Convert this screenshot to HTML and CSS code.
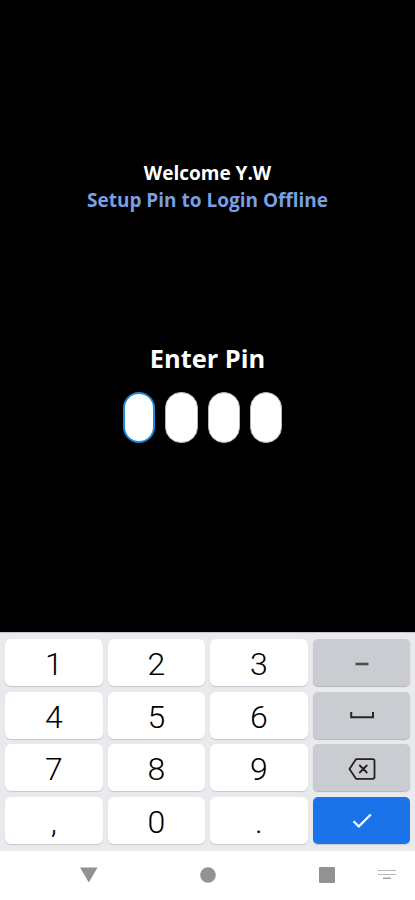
FILE: index.html
```html
<!DOCTYPE html>
<html lang="en">
<head>
    <meta charset="UTF-8">
    <meta name="viewport" content="width=device-width, initial-scale=1.0">
    <title>Setup Pin</title>
    <link rel="stylesheet" href="styles.css">
</head>
<body>
    <div class="screen">
        <div class="content">
            <div class="welcome">Welcome Y.W</div>
            <div class="subtitle">Setup Pin to Login Offline</div>
            <h1>Enter Pin</h1>
            <div class="pins">
                <div class="pin active"></div>
                <div class="pin"></div>
                <div class="pin"></div>
                <div class="pin"></div>
            </div>
        </div>
        <div class="keyboard">
            <button>1</button>
            <button>2</button>
            <button>3</button>
            <button class="gray">
                <svg width="28" height="24" viewBox="0 0 28 24"><path d="M7.5 12h13" stroke="#4b4c50" stroke-width="2.6"/></svg>
            </button>
            <button>4</button>
            <button>5</button>
            <button>6</button>
            <button class="gray">
                <svg width="28" height="24" viewBox="0 0 28 24" fill="none"><path d="M3.2 8v5.2h21.8v-5.2" stroke="#26272b" stroke-width="2"/></svg>
            </button>
            <button>7</button>
            <button>8</button>
            <button>9</button>
            <button class="gray">
                <svg width="28" height="24" viewBox="0 0 28 24" fill="none" stroke="#202124" stroke-width="1.8" stroke-linejoin="round"><path d="M8 2.2h16.8q1.700 0 1.700 1.700v16.200q0 1.700-1.700 1.700h-16.800l-6.500-9.800zM11.300 8l8 8M19.300 8l-8 8"/></svg>
            </button>
            <button>,</button>
            <button>0</button>
            <button>.</button>
            <button class="blue">
                <svg width="28" height="24" viewBox="0 0 28 24" fill="none"><path d="M5.500 12.300l5.300 5.200 12-12" stroke="#fff" stroke-width="2.300"/></svg>
            </button>
        </div>
        <div class="navbar">
            <svg width="18" height="16" viewBox="0 0 18 16" fill="#929292"><path d="M0 0.500h17.500l-8.700 15z"/></svg>
            <svg width="16" height="16" viewBox="0 0 16 16" fill="#929292"><circle cx="8" cy="8" r="7.800"/></svg>
            <svg width="16" height="16" viewBox="0 0 16 16" fill="#929292"><rect width="16" height="16" rx="1"/></svg>
            <svg width="18" height="11" viewBox="0 0 18 11" stroke="#a0a0a0" fill="none"><path d="M0 1.500h18" stroke-width="1.200" stroke-dasharray="2 .6"/><path d="M0 5.500h18" stroke-width="1.200" stroke-dasharray="2 .6"/><path d="M5 9.300h8" stroke-width="1.500"/></svg>
        </div>
    </div>
</body>
</html>
```
FILE: styles.css
```css
body {
    margin: 0;
    background-color: #000;
    font-family: "Open Sans", sans-serif;
}
.screen {
    display: flex;
    flex-direction: column;
    width: 415px;
    height: 900px;
    overflow: hidden;
}
.content {
    flex: 1;
    padding-top: 160px;
    text-align: center;
    font-weight: bold;
    color: #fff;
}
.welcome,
.subtitle {
    font-size: 19px;
    line-height: 27px;
}
.subtitle {
    color: #7a9fe0;
}
h1 {
    margin: 126px 0 0;
    font-size: 25.4px;
    line-height: 36px;
}
.pins {
    display: flex;
    gap: 10px;
    margin: 15.500px 0 0 123px;
}
.pin {
    box-sizing: border-box;
    width: 32.3px;
    height: 51px;
    background-color: #fff;
    border: 1px solid #b5b5b5;
    border-radius: 16px;
}
.pin.active {
    border: 2px solid #1d87d8;
}
.keyboard {
    box-sizing: border-box;
    display: grid;
    grid-template-columns: repeat(4, 1fr);
    grid-template-rows: repeat(4, 1fr);
    gap: 5.500px 5px;
    height: 219px;
    padding: 6px 5px 7px;
    background-color: #e8eaed;
    border-top: 1px solid #c4c6c9;
}
button {
    display: flex;
    align-items: center;
    justify-content: center;
    padding: 3px 0 0;
    font-family: Roboto, sans-serif;
    font-size: 32px;
    font-weight: 300;
    line-height: 36px;
    color: #000;
    background-color: #fff;
    border: none;
    border-radius: 6px;
    box-shadow: 0 1px 1px #c6c8cc;
}
.gray,
.blue {
    padding: 2px 0 0 1px;
    border-radius: 5px;
}
.gray {
    background-color: #cbccd2;
    box-shadow: 0 1px 1px #b4b5b9;
}
.blue {
    background-color: #1a73e8;
}
.navbar {
    box-sizing: border-box;
    display: flex;
    align-items: center;
    height: 49px;
    padding: 0 19px 2px 80px;
    background-color: #fff;
}
.navbar svg:nth-child(2) {
    margin-left: 102px;
}
.navbar svg:nth-child(3) {
    margin-left: 103px;
}
.navbar svg:nth-child(4) {
    margin-left: 43px;
}
```
